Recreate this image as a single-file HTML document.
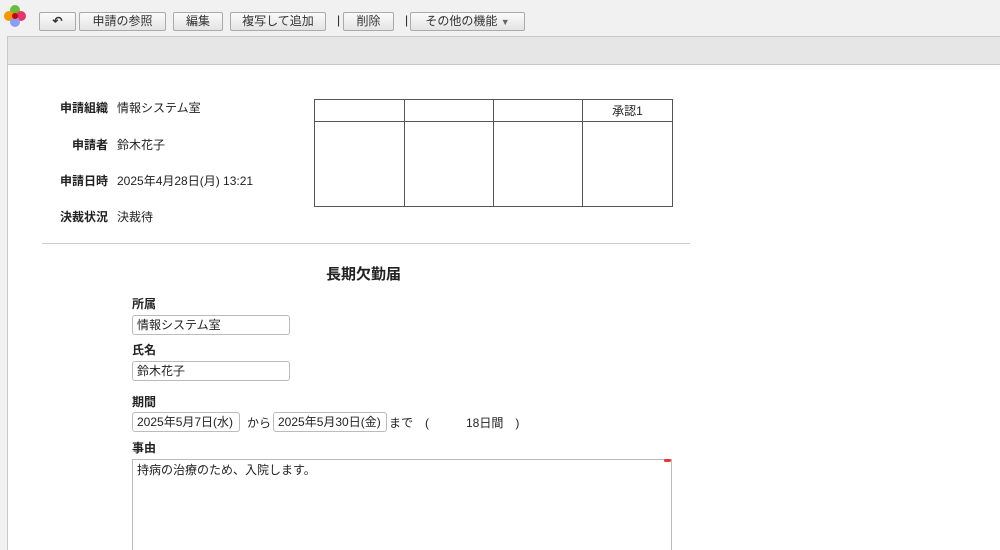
<!DOCTYPE html>
<html><head><meta charset="utf-8"><style>
*{box-sizing:border-box;margin:0;padding:0}
html{width:1000px;height:550px;overflow:hidden}
body{width:1000px;height:550px;overflow:hidden;background:#f1f1f1;font-family:"Liberation Sans","Noto Sans CJK JP",sans-serif;font-size:12px;color:#222;position:relative}
.a{position:absolute}
.btn{position:absolute;top:12px;height:19px;border:1px solid #aaa;border-radius:2px;background:linear-gradient(#fafafa,#e4e4e4);font-size:12px;line-height:17px;text-align:center;color:#333}
.sep{position:absolute;top:13px;font-size:12px}
.main{position:absolute;left:7px;top:36px;width:993px;height:514px;background:#fff;border-left:1px solid #c8c8c8;border-top:1px solid #c8c8c8}
.bar{position:absolute;left:8px;top:37px;width:992px;height:28px;background:#e6e6e6;border-bottom:1px solid #c8c8c8}
.lb{position:absolute;font-weight:bold;font-size:12px;text-align:right;width:70px;left:38px}
.v{position:absolute;left:117px;font-size:12px}
.inp{position:absolute;border:1px solid #bbb;border-radius:3px;height:20px;line-height:18px;padding-left:4px;font-size:12px}
.fl{position:absolute;left:132px;font-weight:bold}
td{border:1px solid #555;padding:0}
</style></head><body>
<svg class="a" style="left:2px;top:3px" width="26" height="26" viewBox="0 0 26 26">
<circle cx="13" cy="7" r="5" fill="#6cbb3c"/><circle cx="7" cy="13" r="5" fill="#f39800"/><circle cx="19" cy="13" r="5" fill="#e8336d"/><circle cx="13" cy="19" r="5" fill="#8c9cf0"/><circle cx="13" cy="13" r="3" fill="#c00"/></svg>
<div class="btn" style="left:39px;width:37px;font-weight:bold">&#x21B6;</div>
<div class="btn" style="left:79px;width:87px">申請の参照</div>
<div class="btn" style="left:173px;width:50px">編集</div>
<div class="btn" style="left:230px;width:96px">複写して追加</div>
<div class="sep" style="left:337px">|</div>
<div class="btn" style="left:343px;width:51px">削除</div>
<div class="sep" style="left:405px">|</div>
<div class="btn" style="left:410px;width:115px">その他の機能 <span style="font-size:9px;color:#666">▼</span></div>
<div class="main"></div><div class="bar"></div>
<div class="lb" style="top:99px">申請組織</div><div class="v" style="top:99px">情報システム室</div>
<div class="lb" style="top:136px">申請者</div><div class="v" style="top:136px">鈴木花子</div>
<div class="lb" style="top:172px">申請日時</div><div class="v" style="top:172px">2025年4月28日(月) 13:21</div>
<div class="lb" style="top:208px">決裁状況</div><div class="v" style="top:208px">決裁待</div>
<table class="a" style="left:314px;top:99px;width:358px;height:108px;border-collapse:collapse;font-size:12px;table-layout:fixed">
<colgroup><col style="width:90px"><col style="width:89px"><col style="width:89px"><col style="width:90px"></colgroup>
<tr style="height:22px"><td></td><td></td><td></td><td style="text-align:center">承認1</td></tr>
<tr><td></td><td></td><td></td><td></td></tr></table>
<div class="a" style="left:42px;top:243px;width:648px;border-top:1px solid #ccc"></div>
<div class="a" style="left:326px;top:263px;font-size:15px;font-weight:bold">長期欠勤届</div>
<div class="fl" style="top:295px">所属</div>
<div class="inp" style="left:132px;top:315px;width:158px">情報システム室</div>
<div class="fl" style="top:341px">氏名</div>
<div class="inp" style="left:132px;top:361px;width:158px">鈴木花子</div>
<div class="fl" style="top:393px">期間</div>
<div class="inp" style="left:132px;top:412px;width:108px">2025年5月7日(水)</div>
<div class="a" style="left:247px;top:414px">から</div>
<div class="inp" style="left:273px;top:412px;width:114px">2025年5月30日(金)</div>
<div class="a" style="left:389px;top:414px">まで　(</div>
<div class="a" style="left:466px;top:414px">18日間　)</div>
<div class="fl" style="top:439px">事由</div>
<div class="a" style="left:132px;top:459px;width:540px;height:100px;border:1px solid #bbb;padding:1px 4px">持病の治療のため、入院します。</div>
<div class="a" style="left:664px;top:459px;width:7px;height:3px;background:#e33;border-radius:2px"></div>
</body></html>
